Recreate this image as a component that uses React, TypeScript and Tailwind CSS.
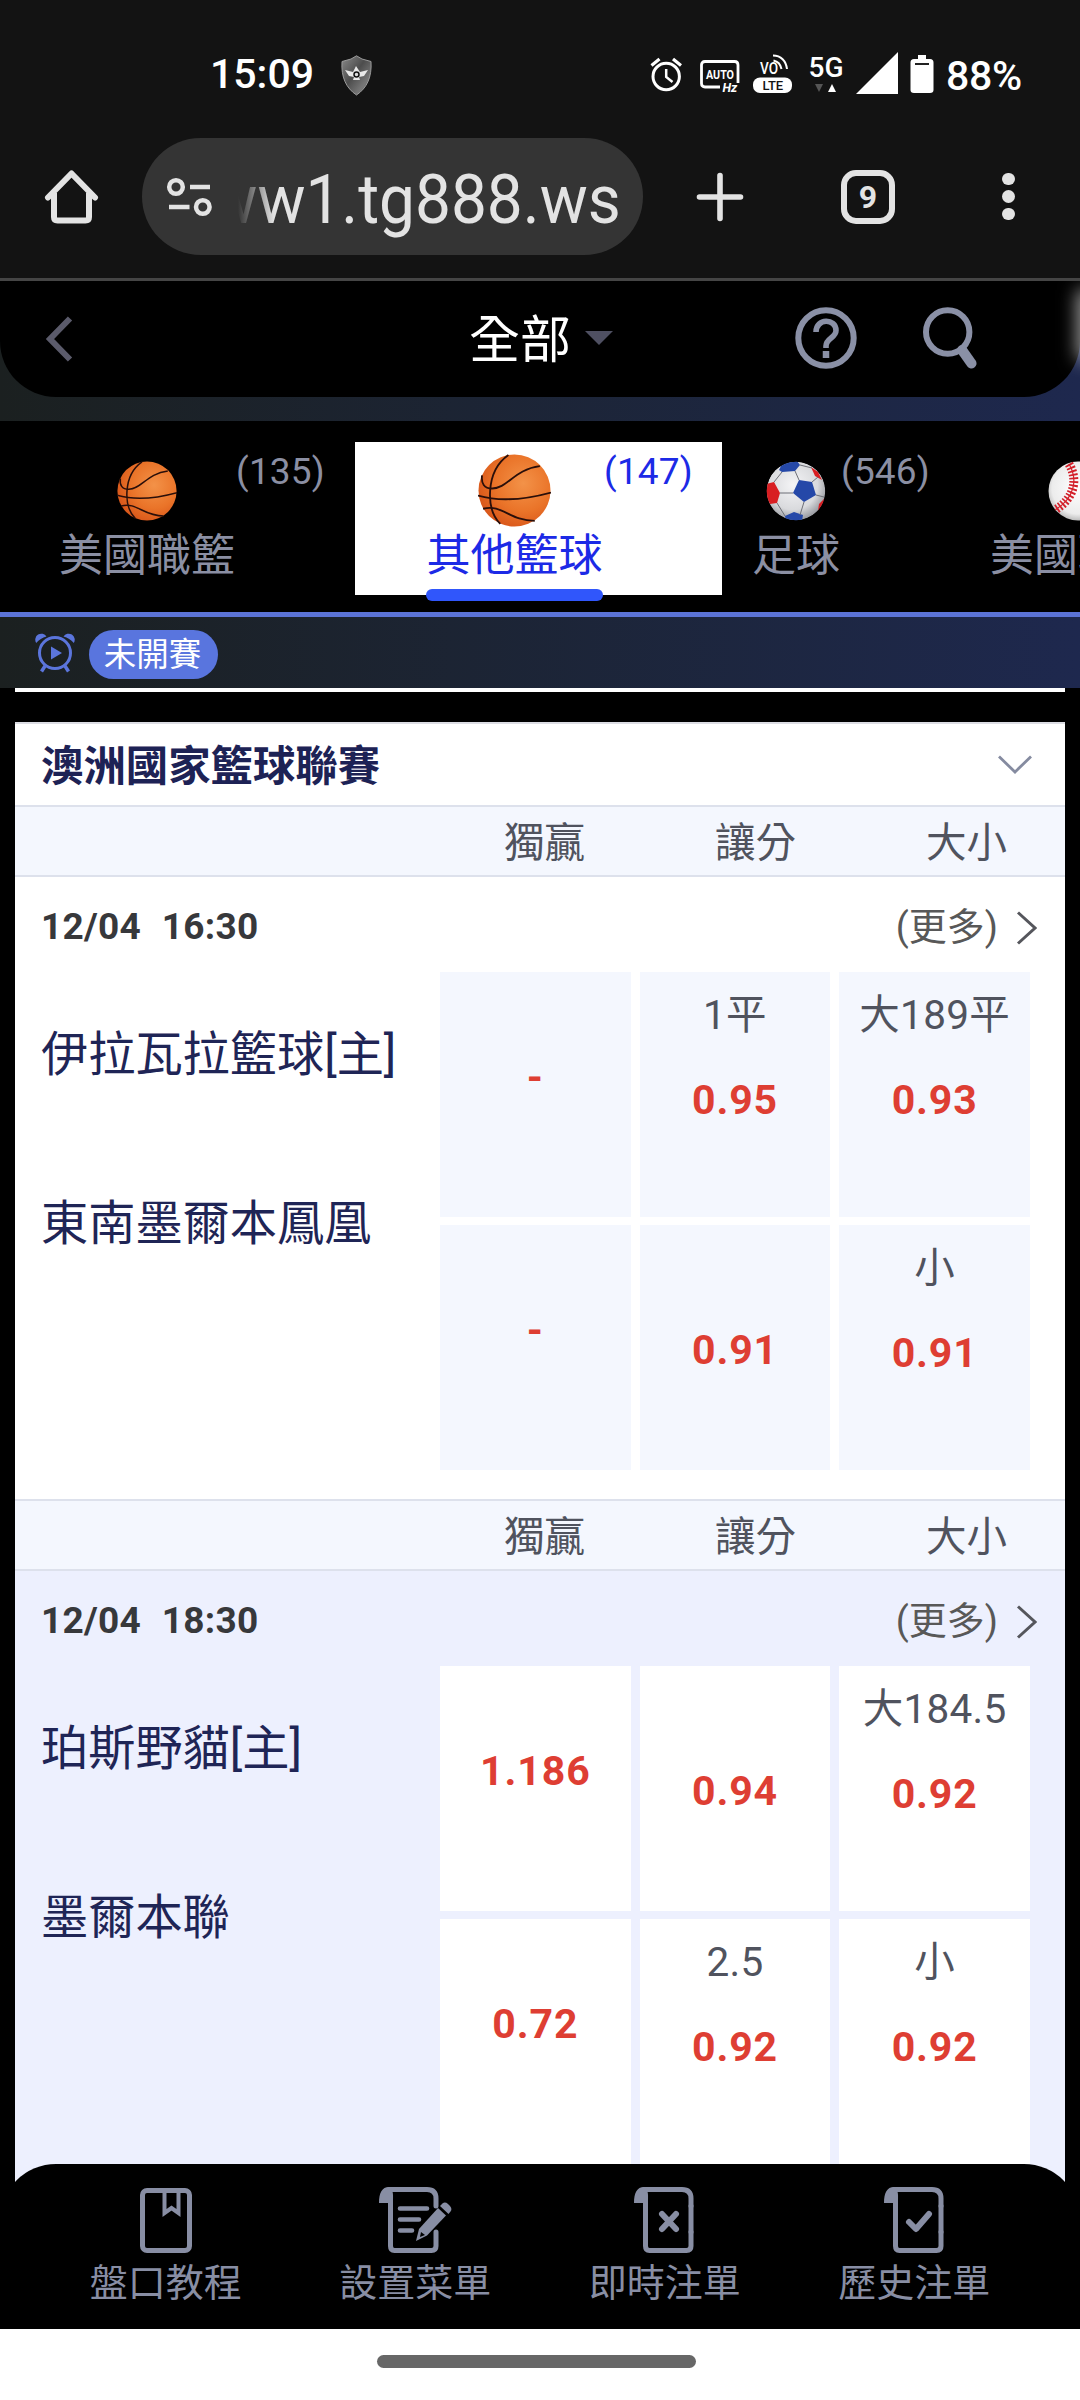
import type { ReactNode } from "react";

interface Odds {
  line?: string;
  price: string;
}

interface Match {
  time: string;
  home: string;
  away: string;
  shaded?: boolean;
  odds: Odds[];
}

const matches: Match[] = [
  {
    time: "12/04  16:30",
    home: "伊拉瓦拉籃球[主]",
    away: "東南墨爾本鳳凰",
    odds: [
      { price: "-" },
      { line: "1平", price: "0.95" },
      { line: "大189平", price: "0.93" },
      { price: "-" },
      { line: "", price: "0.91" },
      { line: "小", price: "0.91" },
    ],
  },
  {
    time: "12/04  18:30",
    home: "珀斯野貓[主]",
    away: "墨爾本聯",
    shaded: true,
    odds: [
      { price: "1.186" },
      { line: "", price: "0.94" },
      { line: "大184.5", price: "0.92" },
      { price: "0.72" },
      { line: "2.5", price: "0.92" },
      { line: "小", price: "0.92" },
    ],
  },
];

/* ---------- sport balls ---------- */

function Basketball({ size }: { size: number }) {
  return (
    <svg width={size} height={size} viewBox="0 0 72 72" className="shrink-0">
      <defs>
        <radialGradient id="basket" cx="0.62" cy="0.4" r="0.65">
          <stop offset="0" stopColor="#f39248" />
          <stop offset="0.6" stopColor="#ea7429" />
          <stop offset="1" stopColor="#d9571a" />
        </radialGradient>
      </defs>
      <circle cx="36" cy="36" r="35.5" fill="url(#basket)" />
      <g fill="none" stroke="#2a0f0a" strokeWidth="1.8">
        <path d="M30 1C20 8 13 20 12 36C11 50 15 62 22 69" />
        <path d="M4 21C3 29 6 34 14 34C29 34 36 15 61 12" />
        <path d="M0 41C24 48 50 44 72 38" />
        <path d="M5 54C24 49 31 66 56 66" />
      </g>
    </svg>
  );
}

function SoccerBall() {
  return (
    <svg width="60" height="60" viewBox="0 0 60 60" className="shrink-0">
      <defs>
        <radialGradient id="soccer" cx="0.45" cy="0.4" r="0.6">
          <stop offset="0" stopColor="#f4f4f6" />
          <stop offset="0.7" stopColor="#d9dadd" />
          <stop offset="1" stopColor="#9a9ca2" />
        </radialGradient>
        <clipPath id="soccerClip">
          <circle cx="30" cy="30" r="29.3" />
        </clipPath>
      </defs>
      <g clipPath="url(#soccerClip)">
        <circle cx="30" cy="30" r="29.3" fill="url(#soccer)" />
        <path d="M13 9L17 1L31 0L34 4L29 10L16 11Z" fill="#2548a8" />
        <path d="M33 19L46 21L50 34L38 41L27 32Z" fill="#2548a8" />
        <path d="M19 55L28 51L37 54L36 60H20Z" fill="#2548a8" />
        <path d="M0 23L8 21L14 32L11 42L4 43L0 36Z" fill="#d81e22" />
        <path d="M45 6L52 11L56 19L49 15Z" fill="#d81e22" />
        <path d="M53 43L60 36L57 47L52 50Z" fill="#d81e22" />
        <g fill="none" stroke="#6d6f76" strokeWidth="1">
          <path d="M16 11L8 21M29 10L33 19M14 32L27 32M38 41L34 54M11 42L19 55M46 21L52 16M50 34L58 36M34 4L46 7" />
        </g>
      </g>
    </svg>
  );
}

function Baseball() {
  return (
    <svg width="60" height="60" viewBox="0 0 60 60" className="shrink-0">
      <defs>
        <radialGradient id="baseball" cx="0.5" cy="0.45" r="0.55">
          <stop offset="0" stopColor="#ffffff" />
          <stop offset="0.8" stopColor="#ececec" />
          <stop offset="1" stopColor="#bdbdbd" />
        </radialGradient>
      </defs>
      <circle cx="30" cy="30" r="29.5" fill="url(#baseball)" />
      <path d="M21 3C30 18 27 37 7 49" fill="none" stroke="#d3202a" strokeWidth="9" strokeDasharray="1.8 1.8" />
      <path d="M21 3C30 18 27 37 7 49" fill="none" stroke="#d3202a" strokeWidth="1.2" />
    </svg>
  );
}

/* ---------- status bar ---------- */

function StatusBar() {
  return (
    <div className="flex h-[138px] shrink-0 items-start pl-[210px] pt-[49px] text-white">
      <span className="h-[50px] w-[103px] text-[41px] font-medium leading-[50px]">15:09</span>
      <svg width="31" height="41" viewBox="0 0 31 41" className="ml-[28px] mt-[6px]">
        <defs>
          <linearGradient id="shield" x1="0" y1="0" x2="1" y2="1">
            <stop offset="0" stopColor="#8a8a8a" />
            <stop offset="0.45" stopColor="#4d4d4d" />
            <stop offset="0.75" stopColor="#777" />
            <stop offset="1" stopColor="#444" />
          </linearGradient>
        </defs>
        <path d="M15.500 .8L21 4L30 6.500C31 22 26 33 15.500 40C5 33 0 22 1 6.500L10 4Z" fill="url(#shield)" stroke="#9b9b9b" strokeWidth="1" />
        <path d="M4 15L12 17L15 11L19 17L27 15L23 21L18 22L19 25H12L13 22L8 21Z" fill="#e8e8e8" />
        <circle cx="15.500" cy="19.500" r="2.500" fill="#ddd" stroke="#111" strokeWidth="1.500" />
      </svg>

      {/* alarm */}
      <svg width="32" height="35" viewBox="0 0 32 35" className="ml-[278px] mt-[8px]" fill="none" stroke="#fff">
        <circle cx="16.200" cy="19.500" r="13.200" strokeWidth="3" />
        <path d="M16.200 12V20L22.500 25" strokeWidth="2.500" />
        <path d="M1.500 8.500L9.500 2M31 8.500L23 2" strokeWidth="3.200" />
      </svg>

      {/* auto hz */}
      <svg width="40" height="34" viewBox="0 0 40 34" className="ml-[18px] mt-[11px]">
        <path d="M20 27H5Q1.500 27 1.500 23.500V5Q1.500 1.500 5 1.500H34.500Q38 1.500 38 5V23" fill="none" stroke="#fff" strokeWidth="2.800" />
        <text x="6" y="18.500" fontSize="13" fontWeight="700" fill="#fff" textLength="28" lengthAdjust="spacingAndGlyphs">AUTO</text>
        <text x="22.500" y="32" fontSize="12.500" fontWeight="700" fontStyle="italic" fill="#fff">Hz</text>
      </svg>

      {/* volte */}
      <svg width="41" height="40" viewBox="0 0 41 40" className="ml-[12px] mt-[5px]">
        <text x="8" y="20" fontSize="16" fontWeight="500" fill="#fff" textLength="18" lengthAdjust="spacingAndGlyphs">VO</text>
        <g fill="none" stroke="#fff" strokeWidth="2">
          <path d="M21.500 6.500C26 7.500 28.500 10 29.500 15M21 1.500C29 1.500 34 7 35 15" />
        </g>
        <rect x="1" y="23.500" width="39" height="15.500" rx="7" fill="#fff" />
        <text x="10.500" y="36" fontSize="13" fontWeight="500" fill="#131313">LTE</text>
      </svg>

      {/* 5G */}
      <div className="ml-[15px] mt-[6px] flex w-[36px] flex-col items-center">
        <span className="h-[26px] text-[28px] font-medium leading-[26px]">5G</span>
        <svg width="24" height="8" viewBox="0 0 24 8" className="mt-[3px]">
          <path d="M1 0H9L5 8Z" fill="#555" />
          <path d="M14 8H22L18 0Z" fill="#fff" />
        </svg>
      </div>

      <svg width="42" height="42" viewBox="0 0 42 42" className="ml-[12px] mt-[3px]">
        <path d="M42 0V42H0Z" fill="#fff" />
      </svg>
      <svg width="24" height="39" viewBox="0 0 24 39" className="ml-[12px] mt-[6px]">
        <path d="M8 0H16V4H20Q23.500 4 23.500 7.500V35Q23.500 38 20 38H4Q.5 38 .5 35V7.500Q.5 4 4 4H8Z" fill="#fff" />
        <path d="M5 9H19" stroke="#222" strokeWidth="2" />
      </svg>
      <span className="ml-[12px] h-[50px] text-[41px] font-medium leading-[54px] tracking-[-0.3px]">88%</span>
    </div>
  );
}

/* ---------- browser toolbar ---------- */

function BrowserBar() {
  return (
    <div className="flex h-[117px] shrink-0 items-center">
      <svg width="56" height="56" viewBox="0 0 56 56" className="ml-[44px]" fill="none" stroke="#e3e3e3" strokeWidth="6" strokeLinecap="round" strokeLinejoin="round">
        <path d="M4 28.500L27.500 4.500L51 28.500" />
        <path d="M10 24V48Q10 51.500 13.500 51.500H41.500Q45 51.500 45 48V24" strokeLinecap="butt" />
      </svg>

      <div className="ml-[42px] flex h-[117px] w-[501px] items-center rounded-full bg-[#343434]">
        <svg width="46" height="40" viewBox="0 0 46 40" className="ml-[24px]" fill="none" stroke="#e3e3e3" strokeWidth="4.500">
          <circle cx="10" cy="10" r="6.800" />
          <circle cx="36.800" cy="30" r="6.800" />
          <path d="M24 10H44M3 30H23.500" />
        </svg>
        <div className="relative ml-[26px] h-[90px] w-[384px] overflow-hidden">
          <span className="absolute right-[1px] top-[2px] origin-right scale-x-[0.94] whitespace-nowrap text-[68px] leading-[92px] text-[#e3e3e3]">
            www1.tg888.ws
          </span>
          <span className="absolute left-0 top-0 h-full w-[36px] bg-linear-to-r from-[#343434] to-[#34343400]" />
        </div>
      </div>

      <svg width="48" height="50" viewBox="0 0 48 50" className="ml-[53px]" stroke="#e3e3e3" strokeWidth="5.600" strokeLinecap="round">
        <path d="M24 3.500V46.500M3.500 25H44.500" />
      </svg>
      <div className="ml-[97px] flex h-[54px] w-[54px] items-center justify-center rounded-[15px] border-[6px] border-[#e3e3e3] text-[32px] font-bold text-[#e3e3e3]">
        9
      </div>
      <div className="ml-[107px] flex flex-col gap-[5px]">
        <span className="h-[12.5px] w-[12.5px] rounded-full bg-[#e3e3e3]" />
        <span className="h-[12.5px] w-[12.5px] rounded-full bg-[#e3e3e3]" />
        <span className="h-[12.5px] w-[12.5px] rounded-full bg-[#e3e3e3]" />
      </div>
    </div>
  );
}

/* ---------- site header ---------- */

function SiteHeader() {
  return (
    <div className="relative h-[140px] shrink-0 overflow-hidden bg-linear-to-r from-[#1b2020] to-[#1e284e]">
      <div className="flex h-[116px] items-center rounded-b-[56px] bg-black">
        <svg width="28" height="46" viewBox="0 0 28 46" className="ml-[45px] mt-[-1px]" fill="none" stroke="#5b5b6b" strokeWidth="6">
          <path d="M25 2.500L5 23L25 43.500" />
        </svg>
        <span className="ml-[396px] mt-[3px] w-[101px] whitespace-nowrap text-[51px] leading-[60px] text-white">全部</span>
        <svg width="28" height="14" viewBox="0 0 28 14" className="ml-[15px] mt-[-2px]">
          <path d="M0 0H28L14 14Z" fill="#4f5062" />
        </svg>
        <svg width="62" height="62" viewBox="0 0 62 62" className="ml-[182px] mt-[-3px]" fill="none" stroke="#8a90a6" strokeWidth="6">
          <circle cx="31" cy="31" r="27.700" />
          <path d="M21 25C21 11 41 11 41 23.500C41 31 31 31 31 39V41" strokeWidth="5.600" />
          <path d="M31 44V51" strokeWidth="6.500" />
        </svg>
        <svg width="56" height="62" viewBox="0 0 56 62" className="ml-[66px] mt-[-3px]" fill="none" stroke="#8a90a6">
          <circle cx="24.700" cy="25" r="21.700" strokeWidth="6" />
          <path d="M39 43L48.500 56.500" strokeWidth="10" strokeLinecap="round" />
        </svg>
      </div>
      <span className="absolute right-[-14px] top-[14px] h-[60px] w-[12px] bg-white shadow-[0_0_18px_5px_rgba(255,255,255,0.6)]" />
    </div>
  );
}

interface SportTabProps {
  name: string;
  count?: string;
  active?: boolean;
  className: string;
  children: ReactNode;
}

function SportTab({ name, count, active, className, children }: SportTabProps) {
  return (
    <div className={`flex h-[153px] shrink-0 ${active ? "bg-white text-[#1c2ae6]" : "text-[#8b8fa3]"} ${className}`}>
      <div className="flex flex-col items-center">
        <div className="flex h-[86px] shrink-0 items-center pt-[11px]">{children}</div>
        <span className="shrink-0 whitespace-nowrap text-[44px] leading-[56px]">{name}</span>
        {active && <span className="mt-[5px] h-[12px] w-[177px] shrink-0 rounded-full bg-[#3056fb]" />}
      </div>
      {count && <span className="mt-[7px] text-[37px] leading-[46px] tracking-[0.2px]">({count})</span>}
    </div>
  );
}

function SportTabs() {
  return (
    <div className="flex h-[196px] shrink-0 overflow-hidden border-b-[5px] border-[#5b73d6] bg-black pt-[21px]">
      <SportTab name="美國職籃" count="135" className="w-[355px] gap-[1px] pl-[59px]">
        <Basketball size={60} />
      </SportTab>
      <SportTab name="其他籃球" count="147" active className="w-[367px] gap-[1px] pl-[71px]">
        <Basketball size={73} />
      </SportTab>
      <SportTab name="足球" count="546" className="w-[268px] gap-[1px] pl-[30px]">
        <SoccerBall />
      </SportTab>
      <SportTab name="美國職棒" className="w-[300px]">
        <Baseball />
      </SportTab>
    </div>
  );
}

function PeriodBar() {
  return (
    <div className="flex h-[71px] shrink-0 items-center bg-linear-to-r from-[#1b2020] to-[#1e284e]">
      <svg width="40" height="40" viewBox="0 0 40 40" className="ml-[35px]" fill="none" stroke="#5b75dc" strokeWidth="3">
        <circle cx="20" cy="20" r="15.500" />
        <path d="M10 33L6.500 38.500M30 33L33.500 38.500" strokeWidth="3.500" />
        <path d="M1.200 10A6 6 0 1 1 11.500 3.500A21 21 0 0 0 1.200 10ZM38.800 10A6 6 0 1 0 28.500 3.500A21 21 0 0 1 38.800 10Z" fill="#5b75dc" stroke="none" />
        <path d="M16 13.500V26.500L27 20Z" fill="#5b75dc" stroke="none" />
      </svg>
      <span className="ml-[14px] mt-[3px] flex h-[49px] w-[129px] items-center justify-center rounded-full bg-[#5975de] pr-[2px] pt-[2px] text-[32.5px] text-white">
        未開賽
      </span>
    </div>
  );
}

/* ---------- odds table ---------- */

function OddsHeader() {
  return (
    <div className="flex h-[72px] shrink-0 items-center border-b-[2px] border-t-[2px] border-[#dde1ec] bg-[#f4f7fe] pl-[424px] pt-[5px] text-[40.5px] text-[#50535e]">
      <span className="w-[211px] shrink-0 text-center">獨贏</span>
      <span className="w-[211px] shrink-0 text-center">讓分</span>
      <span className="w-[211px] shrink-0 text-center">大小</span>
    </div>
  );
}

function OddsCell({ odds, shaded }: { odds: Odds; shaded?: boolean }) {
  return (
    <div className={`flex h-[245px] flex-col items-center ${shaded ? "bg-white" : "bg-[#f4f7fe]"}`}>
      {odds.line === undefined ? (
        <span className="mt-[75px] text-[41px] font-bold leading-[60px] tracking-[0.9px] text-[#de3e33]">{odds.price}</span>
      ) : (
        <>
          <span className="mt-[13px] h-[60px] text-[40.5px] leading-[60px] tracking-[0.3px] text-[#50535e]">{odds.line}</span>
          <span className={`${odds.line ? "mt-[25px]" : "mt-[22px]"} text-[41px] font-bold leading-[60px] tracking-[0.9px] text-[#de3e33]`}>
            {odds.price}
          </span>
        </>
      )}
    </div>
  );
}

function MatchRow({ match }: { match: Match }) {
  return (
    <div className={`h-[622px] shrink-0 ${match.shaded ? "bg-[#edf0fe]" : "bg-white"}`}>
      <div className="flex h-[95px] items-center justify-between pl-[26px] pr-[28px] pt-[6px]">
        <span className="mt-[-2px] whitespace-pre text-[37px] font-bold tracking-[0.3px] text-[#37383b] [word-spacing:0.8px]">
          {match.time}
        </span>
        <div className="flex items-center gap-[18px] text-[38px] text-[#585858]">
          <span>(更多)</span>
          <svg width="21" height="34" viewBox="0 0 21 34" fill="none" stroke="#55565c" strokeWidth="3">
            <path d="M2 1.500L19 17L2 32.500" />
          </svg>
        </div>
      </div>
      <div className="flex">
        <div className="w-[425px] pl-[26px] text-[47.2px] text-[#1f2556]">
          <p className="mt-[48px] h-[70px] whitespace-nowrap leading-[70px]">{match.home}</p>
          <p className="mt-[99px] h-[70px] whitespace-nowrap leading-[70px]">{match.away}</p>
        </div>
        <div className="grid w-[590px] grid-cols-3 gap-x-[9px] gap-y-[8px]">
          {match.odds.map((o, i) => (
            <OddsCell key={i} odds={o} shaded={match.shaded} />
          ))}
        </div>
      </div>
    </div>
  );
}

function LeagueList() {
  return (
    <div className="h-[1642px] shrink-0 overflow-hidden bg-black px-[15px]">
      <div className="mb-[30px] h-[4px] bg-white" />
      <div className="flex h-[83px] items-center justify-between border-t-[2px] border-[#dcdde4] bg-white pl-[26px] pr-[32px]">
        <h2 className="pt-[4px] text-[42.4px] font-bold text-[#1d2255]">澳洲國家籃球聯賽</h2>
        <svg width="36" height="20" viewBox="0 0 36 20" fill="none" stroke="#858ba0" strokeWidth="2.800">
          <path d="M2 1.500L18 17L34 1.500" />
        </svg>
      </div>
      {matches.map((m) => (
        <div key={m.time}>
          <OddsHeader />
          <MatchRow match={m} />
        </div>
      ))}
    </div>
  );
}

/* ---------- bottom navigation ---------- */

function Sheet({ children, cut }: { children: ReactNode; cut?: boolean }) {
  return (
    <svg width="74" height="68" viewBox="0 0 74 68" fill="none" stroke="#888ea4" strokeWidth="5" strokeLinecap="round" strokeLinejoin="round">
      <path d="M10 3.500H48Q57 3.500 57 12.500V20" />
      <path d="M57 20V46" stroke={cut ? "none" : "#888ea4"} />
      <path d="M57 46V60Q57 64.500 52.500 64.500H15.500Q11.500 64.500 11.500 60V16" />
      <path d="M0 17C0 7 3 1 10 1C15 4 14 9 14 17Z" fill="#888ea4" stroke="none" />
      {children}
    </svg>
  );
}

function NavItem({ label, children }: { label: string; children: ReactNode }) {
  return (
    <div className="flex flex-1 flex-col items-center">
      <div className="h-[68px]">{children}</div>
      <span className="mt-[4px] text-[38px] leading-[50px]">{label}</span>
    </div>
  );
}

function BottomNav() {
  return (
    <nav className="relative -mt-[77px] flex h-[165px] shrink-0 rounded-t-[56px] bg-black px-[41px] pt-[22px] text-[#888ea4]">
      <NavItem label="盤口教程">
        <svg width="54" height="68" viewBox="0 0 54 68" fill="none" stroke="#888ea4" strokeWidth="5">
          <rect x="3.500" y="4.500" width="47" height="60" rx="4.500" />
          <path d="M25.500 5V27L32.500 22L39.500 27V5" strokeWidth="4" />
        </svg>
      </NavItem>
      <NavItem label="設置菜單">
        <div className="pl-[2px]">
          <Sheet cut>
            <path d="M21 22.500H48M21 33.500H40M21 44.500H33" strokeWidth="4.600" />
            <path d="M37 55L40 43L59 22L67 29.500L48 49.500Z" fill="#888ea4" stroke="none" />
            <path d="M61 20L63.500 17.500Q66 15.500 69 18L71 20Q73.500 23 71.500 25.500L69.500 28Z" fill="#888ea4" stroke="none" />
            <path d="M42 46L46 49L41 51Z" fill="#000" stroke="none" />
          </Sheet>
        </div>
      </NavItem>
      <NavItem label="即時注單">
        <div className="pl-[13px]">
          <Sheet>
            <path d="M28 28L42 43M42 28L28 43" strokeWidth="6" />
          </Sheet>
        </div>
      </NavItem>
      <NavItem label="歷史注單">
        <div className="pl-[13px]">
          <Sheet>
            <path d="M25 36L32 43L45 28" strokeWidth="6" />
          </Sheet>
        </div>
      </NavItem>
    </nav>
  );
}

export default function App() {
  return (
    <div className="flex h-[2400px] w-[1080px] flex-col overflow-hidden bg-white font-['Roboto','Noto_Sans_CJK_TC',sans-serif]">
      <div className="flex h-[281px] shrink-0 flex-col border-b-[3px] border-[#454545] bg-[#131313]">
        <StatusBar />
        <BrowserBar />
      </div>
      <SiteHeader />
      <SportTabs />
      <PeriodBar />
      {/* list runs under the rounded top corners of the nav */}
      <div className="h-[1553px] shrink-0 overflow-hidden bg-black">
        <LeagueList />
      </div>
      <BottomNav />
      <div className="flex flex-1 justify-center pr-[7px] pt-[26px]">
        <span className="h-[13px] w-[319px] rounded-full bg-[#676767]" />
      </div>
    </div>
  );
}
